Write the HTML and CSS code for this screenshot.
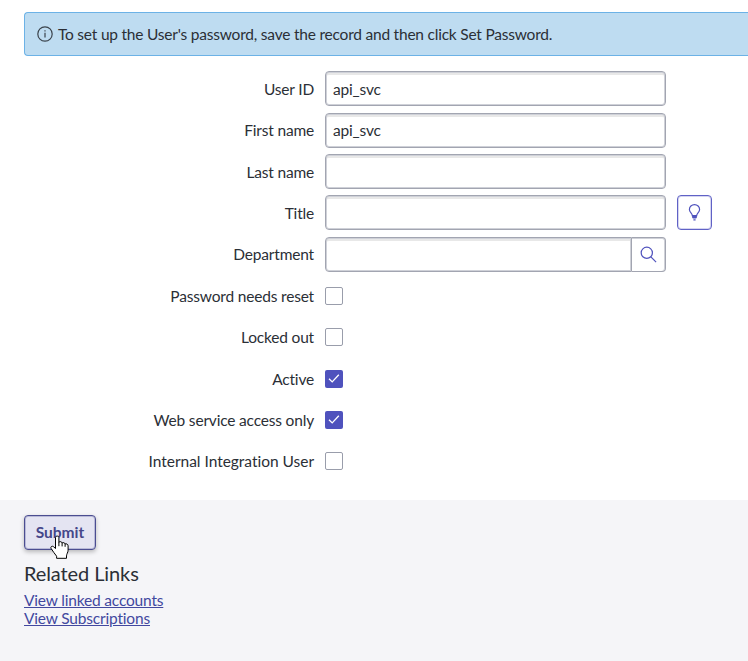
FILE: index.html
```html
<!DOCTYPE html>
<html lang="en">
<head>
  <meta charset="utf-8">
  <title>User</title>
  <link rel="stylesheet" href="styles.css">
</head>
<body>
  <div class="message">
    <svg class="info-icon" viewBox="0 0 16 16">
      <circle cx="8" cy="8" r="7.2"/>
      <path d="M8 6.8v4.8M8 4.2v1.3"/>
    </svg>
    <span>To set up the User's password, save the record and then click Set Password.</span>
  </div>

  <form class="user-form">
    <div class="row">
      <label for="user-id">User ID</label>
      <input type="text" class="field" id="user-id" value="api_svc">
    </div>
    <div class="row">
      <label for="first-name">First name</label>
      <input type="text" class="field" id="first-name" value="api_svc">
    </div>
    <div class="row">
      <label for="last-name">Last name</label>
      <input type="text" class="field" id="last-name">
    </div>
    <div class="row">
      <label for="title">Title</label>
      <input type="text" class="field" id="title">
      <button type="button" class="suggest-button" aria-label="Suggestion">
        <svg width="13" height="17" viewBox="0 0 13 17">
          <path d="M4.3 11.6C4.3 9.2 1.4 8.4 1.4 5.4a5.1 4.8 0 0 1 10.2 0c0 3-2.9 3.8-2.9 6.2z"/>
          <path class="bulb-base" d="M4.1 11.6h4.8v2l-.8.8H4.9l-.8-.8zM5.4 15.2h2.2v1.3H5.4z"/>
        </svg>
      </button>
    </div>
    <div class="row">
      <label for="department">Department</label>
      <div class="lookup">
        <input type="text" class="field" id="department">
        <button type="button" class="lookup-button" aria-label="Search">
          <svg width="17" height="17" viewBox="0 0 17 17">
            <circle cx="6.8" cy="6.8" r="5.6"/>
            <path d="M10.9 10.9l5.2 5.2"/>
          </svg>
        </button>
      </div>
    </div>
    <div class="row">
      <label for="password-reset">Password needs reset</label>
      <input type="checkbox" class="check" id="password-reset">
    </div>
    <div class="row">
      <label for="locked-out">Locked out</label>
      <input type="checkbox" class="check" id="locked-out">
    </div>
    <div class="row">
      <label>Active</label>
      <span class="check checked">
        <svg viewBox="0 0 18 18"><path d="M4 8.7l3.2 3.2 6.6-7.2"/></svg>
      </span>
    </div>
    <div class="row">
      <label>Web service access only</label>
      <span class="check checked">
        <svg viewBox="0 0 18 18"><path d="M4 8.7l3.2 3.2 6.6-7.2"/></svg>
      </span>
    </div>
    <div class="row">
      <label class="wide-label" for="integration-user">Internal Integration User</label>
      <input type="checkbox" class="check" id="integration-user">
    </div>
  </form>

  <div class="footer">
    <div class="actions">
      <button type="button" class="submit-button">Submit</button>
      <svg class="cursor" width="20" height="25" viewBox="0 0 20 25">
        <path d="M5.5 13.5V2.6C5.5.6 8.900.6 8.900 2.600V7.200c.9-1 3-.6 3.200.8.9-.8 2.800-.3 3 1 1-.6 3 .1 3 1.800v4.400c0 2.100-1.600 4-1.600 5.700v2.400H6.600v-2.100C4.600 19 3 16 1.200 13.600 0 11.800 2.200 10.500 3.500 11.700z"/>
        <path d="M8.900 7v4.200M12.100 8v3.400M15.100 9v2.800"/>
      </svg>
    </div>
    <h2>Related Links</h2>
    <a href="#">View linked accounts</a>
    <a href="#">View Subscriptions</a>
  </div>
</body>
</html>
```
FILE: styles.css
```css
* {
  box-sizing: border-box;
}

body {
  margin: 0;
  min-height: 661px;
  display: flex;
  flex-direction: column;
  overflow: hidden;
  background-color: #fff;
  color: #2b2f36;
  font-family: Lato, sans-serif;
  font-size: 15.5px;
  letter-spacing: -0.18px;
}

.message {
  display: flex;
  align-items: center;
  gap: 5px;
  height: 44px;
  margin: 12px 0 0 24px;
  padding-left: 12px;
  border: 1px solid #6cb2e6;
  border-right: none;
  border-radius: 4px 0 0 4px;
  background-color: #bedcf1;
  white-space: nowrap;
  letter-spacing: -0.215px;
}

svg {
  fill: none;
  stroke: #4f52bd;
  stroke-width: 1.2;
}

.info-icon {
  width: 16px;
  height: 16px;
  stroke: #3a434c;
}

.user-form {
  padding-top: 15.2px;
  height: 444px;
}

.row {
  display: flex;
  align-items: center;
  height: 35px;
  margin-bottom: 6.42px;
}

.row label {
  width: 314px;
  margin-right: 11px;
  text-align: right;
}

.row .wide-label {
  letter-spacing: -0.02px;
}

.field {
  width: 341px;
  height: 35px;
  padding: 1px 7px;
  border: 1px solid #a2a5b1;
  border-radius: 4px;
  box-shadow: inset 0 0 0 1px #cfd1d8, inset 0 3px 0 #e8e8e8;
  color: inherit;
  font: inherit;
  letter-spacing: inherit;
}

.suggest-button {
  display: flex;
  align-items: center;
  justify-content: center;
  width: 35px;
  height: 35px;
  margin-left: 11px;
  padding: 0;
  border: 1px solid #6062c6;
  border-radius: 4px;
  background-color: #fff;
  box-shadow: inset 0 0 0 1px #d5d5f0;
}

.bulb-base {
  fill: #4f52bd;
  stroke: none;
}

.lookup {
  display: flex;
}

.lookup .field {
  width: 307px;
  border-radius: 4px 0 0 4px;
}

.lookup-button {
  display: flex;
  align-items: center;
  justify-content: center;
  width: 34px;
  height: 35px;
  padding: 0;
  border: 1px solid #a2a5b1;
  border-left: none;
  border-radius: 0 4px 4px 0;
  background-color: #fff;
  box-shadow: inset -1px 0 0 #cfd1d8, inset 0 1px 0 #cfd1d8;
}

.check {
  appearance: none;
  width: 18px;
  height: 18px;
  margin: 0;
  border: 1px solid #999dab;
  border-radius: 2px;
  background-color: #fff;
}

.checked {
  border: none;
  background-color: #4f52bd;
}

.checked svg {
  display: block;
  stroke: #fff;
  stroke-width: 1.3;
}

.footer {
  flex: 1;
  padding: 15px 24px;
  background-color: #f5f5f8;
}

.actions {
  position: relative;
  height: 35px;
}

.submit-button {
  width: 72px;
  height: 35px;
  padding: 0 0 2px;
  border: 1px solid #4b4d91;
  border-radius: 4px;
  background-color: #e4e4f2;
  box-shadow: 0 2px 4px rgba(0, 0, 0, 0.25), inset 0 0 0 1px #b9bad8;
  color: #45478a;
  font: bold 15.5px Lato, sans-serif;
}

.cursor {
  position: absolute;
  left: 26px;
  top: 20px;
  fill: #fff;
  stroke: #000;
  stroke-width: 1;
}

.footer h2 {
  margin: 10px 0 5px;
  font-size: 20px;
  font-weight: normal;
  letter-spacing: -0.1px;
  line-height: 26px;
}

.footer a {
  display: block;
  width: max-content;
  color: #42489f;
  line-height: 18.4px;
}
```
